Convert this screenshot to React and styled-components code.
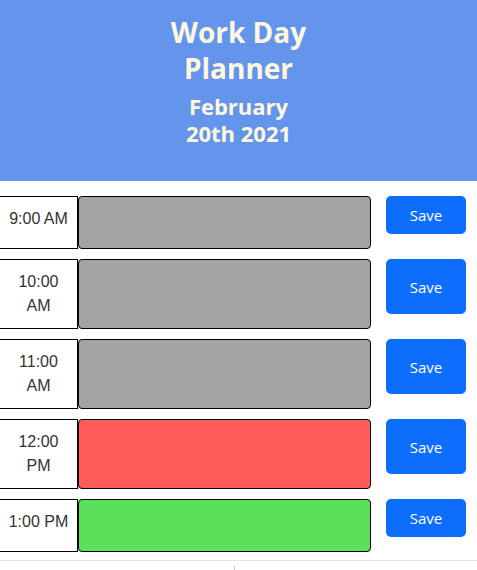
import React from "react";
import styled, { createGlobalStyle } from "styled-components";

const GlobalStyle = createGlobalStyle`
  body {
    margin: 0;
    background: #fff;
    font-family: "Open Sans", "Noto Sans", sans-serif;
    color: #212529;
  }
`;

// header banner
const Header = styled.header`
  background-color: #6495ed;
  color: #fff8dc;
  text-align: center;
  padding: 14px 0 34px;
`;

const Title = styled.h1`
  margin: 0 auto 7px;
  width: 160px;
  font-size: 28px;
  line-height: 36px;
  font-weight: 700;
`;

const CurrentDay = styled.h3`
  margin: 0 auto;
  width: 140px;
  font-size: 22px;
  line-height: 27px;
  font-weight: 700;
`;

const Planner = styled.main`
  display: flex;
  flex-direction: column;
  gap: 10px;
  padding-top: 15px;
`;

const Row = styled.div`
  display: flex;
  min-height: 53px;
`;

const Hour = styled.div`
  box-sizing: border-box;
  width: 78px;
  flex-shrink: 0;
  padding: 10px 7px;
  border: 1px solid #000;
  border-left: none;
  background: #fff;
  text-align: center;
  font-family: "Liberation Sans", Arial, sans-serif;
  font-size: 16px;
  line-height: 24px;
  color: #333;
`;

const colors = {
  past: "#a3a3a3",
  present: "#ff5a5a",
  future: "#5ae05a",
};

const Description = styled.textarea`
  box-sizing: border-box;
  flex: 1;
  margin: 0;
  padding: 4px 6px;
  border: 1px solid #000;
  border-radius: 4px;
  resize: none;
  background-color: ${(p) => colors[p.$tense]};
  font-family: inherit;
  font-size: 16px;
  line-height: 24px;
`;

const SaveButton = styled.button`
  box-sizing: border-box;
  width: 80px;
  margin: 0 11px 15px 15px;
  border: none;
  border-radius: 5px;
  background-color: #0d6efd;
  color: #fff;
  font-family: "Open Sans", "Noto Sans", sans-serif;
  font-size: 15px;
  cursor: pointer;
`;

const Footer = styled.footer`
  margin-top: 8px;
  border-top: 1px solid #dee2e6;
  display: flex;
  justify-content: center;
  padding-top: 5px;
`;

const Tick = styled.span`
  display: block;
  width: 1px;
  height: 5px;
  margin-left: -9px;
  background: #c8c8c8;
`;

const hours = [
  { label: "9:00 AM", tense: "past" },
  { label: "10:00 AM", tense: "past" },
  { label: "11:00 AM", tense: "past" },
  { label: "12:00 PM", tense: "present" },
  { label: "1:00 PM", tense: "future" },
];

export default function App() {
  return (
    <>
      <GlobalStyle />
      <Header>
        <Title>Work Day Planner</Title>
        <CurrentDay>February 20th 2021</CurrentDay>
      </Header>
      <Planner>
        {hours.map((h) => (
          <Row key={h.label}>
            <Hour>{h.label}</Hour>
            <Description rows={1} $tense={h.tense} />
            <SaveButton>Save</SaveButton>
          </Row>
        ))}
      </Planner>
      <Footer>
        <Tick />
      </Footer>
    </>
  );
}
